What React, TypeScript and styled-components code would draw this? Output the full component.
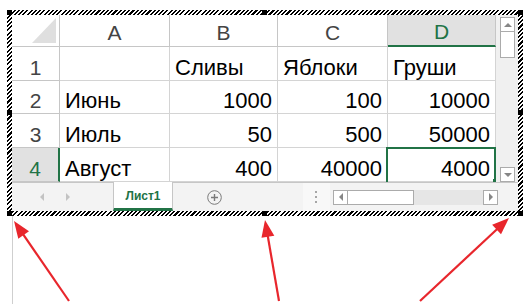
import { Fragment } from "react";
import styled, { createGlobalStyle } from "styled-components";

const GREEN = "#217346";
const GRID = "#d4d4d4";
const HEAD_LINE = "#c6c6c6";

const GlobalStyle = createGlobalStyle`
  html, body {
    margin: 0;
    padding: 0;
    background: #fff;
  }
  body {
    width: 530px;
    height: 304px;
    overflow: hidden;
    font-family: "Liberation Sans", Arial, sans-serif;
  }
`;

const Page = styled.div`
  position: relative;
  width: 530px;
  height: 304px;
  padding: 10px 0 0 7px;
  box-sizing: border-box;
`;

// hatched selection frame of the embedded object
const Frame = styled.div`
  position: relative;
  width: 516px;
  padding: 5px;
  box-sizing: border-box;
  background: repeating-linear-gradient(-45deg, #000 0 1.5px, #fff 1.5px 3px);
`;

const Handle = styled.span<{ $x: string; $y: string }>`
  position: absolute;
  width: 5px;
  height: 5px;
  background: #000;
  left: ${({ $x }) => $x};
  top: ${({ $y }) => $y};
`;

const Inner = styled.div`
  display: flex;
  flex-direction: column;
  background: #fff;
`;

const SheetArea = styled.div`
  display: flex;
`;

const Grid = styled.div`
  display: grid;
  grid-template-columns: 48px 110px 108px 110px 108px;
  grid-template-rows: 32px 34px 33px 34px 34px;
`;

const Corner = styled.div`
  position: relative;
  border-right: 1px solid ${HEAD_LINE};
  border-bottom: 1px solid ${HEAD_LINE};

  &::after {
    content: "";
    position: absolute;
    right: 3px;
    bottom: 3px;
    width: 24px;
    height: 25px;
    background: #dfdfdf;
    clip-path: polygon(100% 0, 100% 100%, 0 100%);
  }
`;

const ColHead = styled.div<{ $active?: boolean }>`
  display: flex;
  align-items: flex-end;
  justify-content: center;
  padding-bottom: 1px;
  box-sizing: border-box;
  font-size: 21px;
  line-height: 24px;
  color: ${({ $active }) => ($active ? GREEN : "#444")};
  background: ${({ $active }) => ($active ? "#e1e1e1" : "#fff")};
  border-right: 1px solid ${HEAD_LINE};
  border-bottom: ${({ $active }) => ($active ? `2px solid ${GREEN}` : `1px solid ${HEAD_LINE}`)};
`;

const RowHead = styled.div<{ $active?: boolean }>`
  display: flex;
  align-items: flex-end;
  justify-content: center;
  box-sizing: border-box;
  font-size: 21px;
  line-height: 25px;
  color: ${({ $active }) => ($active ? GREEN : "#444")};
  background: ${({ $active }) => ($active ? "#e1e1e1" : "#fff")};
  border-right: ${({ $active }) => ($active ? `2px solid ${GREEN}` : `1px solid ${HEAD_LINE}`)};
  border-bottom: 1px solid ${HEAD_LINE};
`;

const Cell = styled.div<{ $num?: boolean; $selected?: boolean }>`
  position: relative;
  display: flex;
  align-items: flex-end;
  justify-content: ${({ $num }) => ($num ? "flex-end" : "flex-start")};
  padding: 0 5px;
  box-sizing: border-box;
  font-size: 22px;
  line-height: 25px;
  color: #000;
  white-space: nowrap;
  border-right: 1px solid ${GRID};
  border-bottom: 1px solid ${GRID};

  ${({ $selected }) =>
    $selected &&
    `
    &::before {
      content: "";
      position: absolute;
      left: -2px;
      top: -1px;
      right: -1px;
      bottom: -1px;
      border: 2px solid ${GREEN};
      border-bottom: none;
    }
    &::after {
      content: "";
      position: absolute;
      right: -1px;
      bottom: -1px;
      width: 3px;
      height: 3px;
      background: ${GREEN};
    }
  `}
`;

const VScroll = styled.div`
  display: flex;
  flex-direction: column;
  width: 22px;
  padding: 2px 3px 0 4px;
  box-sizing: border-box;
  background: #f0f0f0;
`;

const ScrollBtn = styled.div`
  display: flex;
  align-items: center;
  justify-content: center;
  width: 15px;
  height: 15px;
  box-sizing: border-box;
  background: #fff;
  border: 1px solid #ababab;
`;

const VThumb = styled.div`
  width: 15px;
  height: 26px;
  box-sizing: border-box;
  background: #fff;
  border: 1px solid #ababab;
  border-top: none;
`;

const Fill = styled.div`
  flex: 1;
`;

const TabBar = styled.div`
  display: flex;
  align-items: center;
  height: 29px;
  background: #f3f3f3;
  border-top: 1px solid ${HEAD_LINE};
  box-sizing: border-box;
`;

const NavArea = styled.div`
  display: flex;
  align-items: center;
  gap: 22px;
  width: 101px;
  padding-left: 28px;
  box-sizing: border-box;
  align-self: stretch;
`;

const SheetTab = styled.div`
  display: flex;
  align-items: center;
  justify-content: center;
  align-self: stretch;
  width: 60px;
  margin-top: -1px;
  padding-top: 1px;
  background: #fff;
  border-left: 1px solid ${HEAD_LINE};
  border-right: 1px solid ${HEAD_LINE};
  border-bottom: 3px solid ${GREEN};
  box-sizing: border-box;
  font-size: 12px;
  font-weight: bold;
  color: ${GREEN};
`;

const AddSheet = styled.div`
  display: flex;
  margin-left: 34px;
`;

const Splitter = styled.div`
  display: flex;
  align-items: center;
  justify-content: center;
  align-self: stretch;
  width: 27px;
  background: #f8f8f8;
`;

const HScroll = styled.div`
  display: flex;
  width: 165px;
  height: 15px;
  margin: 0 20px 0 3px;
  background: #e6e6e6;
`;

const HThumb = styled.div`
  width: 66px;
  height: 15px;
  box-sizing: border-box;
  background: #fff;
  border: 1px solid #ababab;
  border-left: none;
`;

const Arrows = styled.svg`
  position: absolute;
  left: 0;
  top: 0;
  pointer-events: none;
`;

const columns = ["A", "B", "C", "D"];

const rows: { label: string; values: (string | number)[] }[] = [
  { label: "", values: ["Сливы", "Яблоки", "Груши"] },
  { label: "Июнь", values: [1000, 100, 10000] },
  { label: "Июль", values: [50, 500, 50000] },
  { label: "Август", values: [400, 40000, 4000] },
];

const Tri = ({ dir, color, size = 4 }: { dir: "up" | "down" | "left" | "right"; color: string; size?: number }) => {
  const s = size;
  const pts =
    dir === "up"
      ? `0,${s} ${s},0 ${2 * s},${s}`
      : dir === "down"
      ? `0,0 ${2 * s},0 ${s},${s}`
      : dir === "left"
      ? `${s},0 ${s},${2 * s} 0,${s}`
      : `0,0 0,${2 * s} ${s},${s}`;
  const w = dir === "up" || dir === "down" ? 2 * s : s;
  const h = dir === "up" || dir === "down" ? s : 2 * s;
  return (
    <svg width={w} height={h} viewBox={`0 0 ${w} ${h}`}>
      <polygon points={pts} fill={color} />
    </svg>
  );
};

// red pointer: line from tail to tip with a filled head
const Pointer = ({ x1, y1, x2, y2 }: { x1: number; y1: number; x2: number; y2: number }) => {
  const dx = x2 - x1;
  const dy = y2 - y1;
  const len = Math.hypot(dx, dy);
  const ux = dx / len;
  const uy = dy / len;
  const head = 17;
  const half = 6.5;
  const bx = x2 - ux * head;
  const by = y2 - uy * head;
  const p1 = `${bx - uy * half},${by + ux * half}`;
  const p2 = `${bx + uy * half},${by - ux * half}`;
  return (
    <g>
      <line x1={x1} y1={y1} x2={bx + ux * 2} y2={by + uy * 2} stroke="#e8262c" strokeWidth={2.2} />
      <polygon points={`${x2},${y2} ${p1} ${p2}`} fill="#e8262c" />
    </g>
  );
};

export default function App() {
  return (
    <Page>
      <GlobalStyle />
      <Frame>
        <Inner>
          <SheetArea>
            <Grid>
              <Corner />
              {columns.map((c) => (
                <ColHead key={c} $active={c === "D"}>
                  {c}
                </ColHead>
              ))}
              {rows.map((row, i) => (
                <Fragment key={i}>
                  <RowHead $active={i === 3}>{i + 1}</RowHead>
                  <Cell>{row.label}</Cell>
                  {row.values.map((v, j) => (
                    <Cell key={j} $num={typeof v === "number"} $selected={i === 3 && j === 2}>
                      {v}
                    </Cell>
                  ))}
                </Fragment>
              ))}
            </Grid>
            <VScroll>
              <ScrollBtn>
                <Tri dir="up" color="#868686" />
              </ScrollBtn>
              <VThumb />
              <Fill />
              <ScrollBtn>
                <Tri dir="down" color="#868686" />
              </ScrollBtn>
            </VScroll>
          </SheetArea>
          <TabBar>
            <NavArea>
              <Tri dir="left" color="#c3c3c3" />
              <Tri dir="right" color="#c3c3c3" />
            </NavArea>
            <SheetTab>Лист1</SheetTab>
            <AddSheet>
              <svg width="15" height="15" viewBox="0 0 15 15">
                <circle cx="7.5" cy="7.5" r="6.8" fill="none" stroke="#7a7a7a" strokeWidth="1" />
                <path d="M7.5 4v7M4 7.5h7" stroke="#7a7a7a" strokeWidth="1.4" />
              </svg>
            </AddSheet>
            <Fill />
            <Splitter>
              <svg width="3" height="12" viewBox="0 0 3 12">
                <rect x="0" y="0" width="2" height="2" fill="#a6a6a6" />
                <rect x="0" y="5" width="2" height="2" fill="#a6a6a6" />
                <rect x="0" y="10" width="2" height="2" fill="#a6a6a6" />
              </svg>
            </Splitter>
            <HScroll>
              <ScrollBtn>
                <Tri dir="left" color="#868686" />
              </ScrollBtn>
              <HThumb />
              <Fill />
              <ScrollBtn>
                <Tri dir="right" color="#868686" />
              </ScrollBtn>
            </HScroll>
          </TabBar>
        </Inner>
        <Handle $x="0" $y="0" />
        <Handle $x="255px" $y="0" />
        <Handle $x="calc(100% - 5px)" $y="0" />
        <Handle $x="0" $y="calc(50% - 3px)" />
        <Handle $x="calc(100% - 5px)" $y="calc(50% - 3px)" />
        <Handle $x="0" $y="calc(100% - 5px)" />
        <Handle $x="255px" $y="calc(100% - 5px)" />
        <Handle $x="calc(100% - 5px)" $y="calc(100% - 5px)" />
      </Frame>
      <Arrows width="530" height="304" viewBox="0 0 530 304">
        <line x1="12.5" y1="216" x2="12.5" y2="304" stroke="#cfcfcf" strokeWidth="1" />
        <Pointer x1={69} y1={301} x2={14} y2={221} />
        <Pointer x1={279} y1={301} x2={265} y2={220} />
        <Pointer x1={420} y1={301} x2={509} y2={218} />
      </Arrows>
    </Page>
  );
}
